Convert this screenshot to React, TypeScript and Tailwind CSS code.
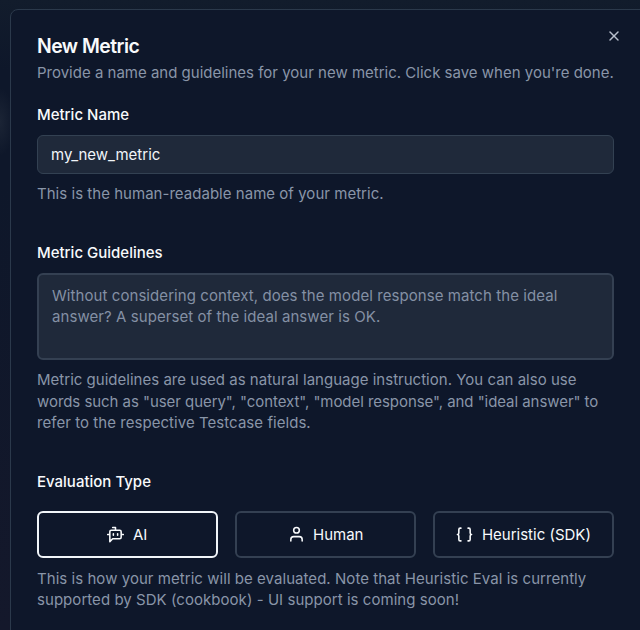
import React from "react";
import { X } from "lucide-react";

const label = "text-[15px] leading-[22px] font-medium text-[#f8fafc]";
const hint = "text-[15px] leading-[21.5px] text-[#8995a8] whitespace-nowrap";
const option = "flex h-[47px] items-center justify-center gap-[8.5px] rounded-md border-2 pt-[2px]";

function Icon({ children }: { children: React.ReactNode }) {
  return (
    <svg className="mb-px size-[17px]" viewBox="0 0 24 24" fill="none" stroke="currentColor" strokeWidth="2.2" strokeLinecap="round" strokeLinejoin="round">
      {children}
    </svg>
  );
}

export default function App() {
  return (
    <div className="h-[630px] w-[640px] overflow-hidden bg-[#101a2b] bg-[radial-gradient(ellipse_14px_34px_at_0px_122px,#1b2435,transparent),linear-gradient(#121c2c,#0e172a_70px,#0e172a_180px,#14182b)] pl-[10px] pt-[9px] font-['Inter',sans-serif]">
      <div className="relative h-[640px] w-[650px] rounded-tl-lg border border-[#2b394b] bg-[#0e172a] pl-[26px] pt-[24px]">
        <X className="absolute left-[595px] top-[18px] size-4 text-[#b8c0cd]" strokeWidth={2.2} />
        <div className="w-[577px]">
          <h1 className="text-[19.4px] leading-[24px] font-semibold tracking-[-0.53px] text-[#f8fafc]">New Metric</h1>
          <p className={`mt-[4px] ${hint}`}>Provide a name and guidelines for your new metric. Click save when you're done.</p>

          <div className={`mt-[20px] ${label}`}>Metric Name</div>
          <div className="mt-[9px] flex h-[39px] items-center rounded-md border border-[#334152] bg-[#1f293a] px-[13px] pt-[3px] text-[15px] text-[#f1f5f9]">my_new_metric</div>
          <p className={`mt-[9px] tracking-[0.03px] ${hint}`}>This is the human-readable name of your metric.</p>

          <div className={`mt-[38px] ${label}`}>Metric Guidelines</div>
          <div className="mt-[9px] h-[87px] rounded-md border-2 border-[#344052] bg-[#1f293a] px-[13px] pt-[9.5px] text-[15px] leading-[21.5px] tracking-[0.07px] text-[#8490a4] whitespace-nowrap">
            Without considering context, does the model response match the ideal<br />answer? A superset of the ideal answer is OK.
          </div>
          <p className={`mt-[9px] ${hint}`}>
            <span className="tracking-[0.015px]">Metric guidelines are used as natural language instruction. You can also use</span><br />
            <span className="tracking-[-0.055px]">words such as "user query", "context", "model response", and "ideal answer" to</span><br />
            <span className="tracking-[0.05px]">refer to the respective Testcase fields.</span>
          </p>

          <div className={`mt-[37px] ${label}`}>Evaluation Type</div>
          <div className="mt-[18px] grid grid-cols-3 gap-[17.5px] text-[15px] text-[#f8fafc]">
            <div className={`${option} border-[#f1f5f9]`}>
              <Icon><path d="M12 6V2H8M8 18l-4 4V8a2 2 0 0 1 2-2h12a2 2 0 0 1 2 2v8a2 2 0 0 1-2 2ZM1 12h3M9 11v2M15 11v2M20 12h3" /></Icon>
              AI
            </div>
            <div className={`${option} border-[#344052]`}>
              <Icon><circle cx="12" cy="6" r="4" /><path d="M20 21v-2a4 4 0 0 0-4-4H8a4 4 0 0 0-4 4v2" /></Icon>
              Human
            </div>
            <div className={`${option} border-[#344052]`}>
              <Icon><path d="M7 3H6a2 2 0 0 0-2 2v5a2 2 0 0 1-2 2 2 2 0 0 1 2 2v5a2 2 0 0 0 2 2h1M17 21h1a2 2 0 0 0 2-2v-5a2 2 0 0 1 2-2 2 2 0 0 1-2-2V5a2 2 0 0 0-2-2h-1" /></Icon>
              Heuristic (SDK)
            </div>
          </div>
          <p className={`mt-[10px] tracking-[0.045px] ${hint}`}>
            This is how your metric will be evaluated. Note that Heuristic Eval is currently<br />
            supported by SDK (cookbook) - UI support is coming soon!
          </p>
        </div>
      </div>
    </div>
  );
}
